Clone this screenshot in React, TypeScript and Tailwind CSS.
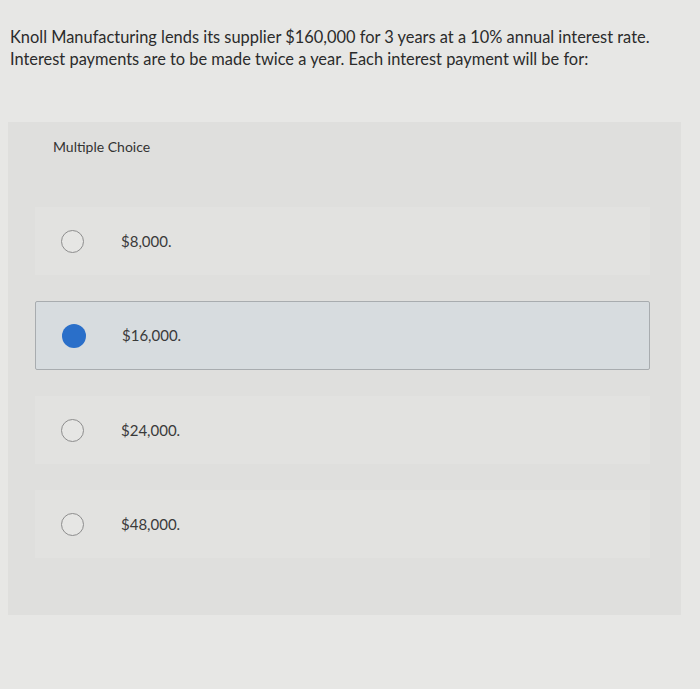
import React from "react";

const options = [
  { label: "$8,000.", selected: false },
  { label: "$16,000.", selected: true },
  { label: "$24,000.", selected: false },
  { label: "$48,000.", selected: false },
];

export default function App() {
  return (
    <div
      className="w-[700px] h-[689px] bg-[#e7e7e5] text-[#2e2e2e] overflow-hidden"
      style={{ fontFamily: "Lato, 'Open Sans', sans-serif" }}
    >
      <div className="pt-[26px] pl-[10px] pr-[20px] text-[16.4px] leading-[22px] text-[#2b2b2b]">
        <p>Knoll Manufacturing lends its supplier $160,000 for 3 years at a 10% annual interest rate.</p>
        <p>Interest payments are to be made twice a year. Each interest payment will be for:</p>
      </div>
      <div className="mt-[52px] ml-[8px] w-[673px] h-[493px] bg-[#dfdfdd]">
        <div className="h-[50px] pl-[45px] pt-[14px] text-[14px] text-[#333]">Multiple Choice</div>
        <div className="flex flex-col gap-[26px] pt-[35px] pl-[27px]">
          {options.map((o) => (
            <div
              key={o.label}
              className={
                o.selected
                  ? "w-[615px] h-[69px] flex items-center bg-[#d7dcdf] border border-[#a8acaf] rounded-[2px]"
                  : "w-[615px] h-[68px] flex items-center bg-[#e2e2e0]"
              }
            >
              <div className="pl-[26px] w-[86px]">
                {o.selected ? (
                  <div className="w-[24px] h-[24px] rounded-full bg-[#2a6fc9]" />
                ) : (
                  <div className="w-[23px] h-[23px] rounded-full border border-[#8d8d8d] bg-[#e6e6e4]" />
                )}
              </div>
              <div className="text-[15px] text-[#3a3a3a]">{o.label}</div>
            </div>
          ))}
        </div>
      </div>
    </div>
  );
}
